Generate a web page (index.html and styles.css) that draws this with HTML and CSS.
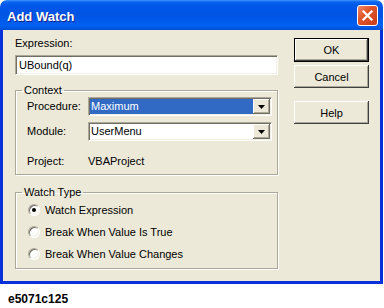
FILE: index.html
```html
<!DOCTYPE html>
<html lang="en">
<head>
  <meta charset="UTF-8">
  <title>Add Watch</title>
  <link rel="stylesheet" href="styles.css">
</head>
<body>
  <div class="window">
    <div class="titlebar">
      <span class="title">Add Watch</span>
      <span class="close">
        <svg width="19" height="19" viewBox="0 0 19 19">
          <path d="M5.5 5.5 L13.5 13.5 M13.5 5.5 L5.5 13.5" stroke="#fff" stroke-width="2.2" stroke-linecap="square"/>
        </svg>
      </span>
    </div>
    <div class="client">
      <div class="main">
        <div class="expr-label">Expression:</div>
        <div class="textbox">UBound(q)</div>

        <fieldset class="group context">
          <legend>Context</legend>
          <div class="field">
            <span class="field-label">Procedure:</span>
            <div class="combo">
              <span class="combo-value selected">Maximum</span>
              <span class="combo-btn">
                <svg width="7" height="4" viewBox="0 0 7 4"><polygon points="0,0 7,0 3.5,4" fill="#000"/></svg>
              </span>
            </div>
          </div>
          <div class="field">
            <span class="field-label">Module:</span>
            <div class="combo">
              <span class="combo-value">UserMenu</span>
              <span class="combo-btn">
                <svg width="7" height="4" viewBox="0 0 7 4"><polygon points="0,0 7,0 3.5,4" fill="#000"/></svg>
              </span>
            </div>
          </div>
          <div class="field project">
            <span class="field-label">Project:</span>
            <span class="project-name">VBAProject</span>
          </div>
        </fieldset>

        <fieldset class="group watch-type">
          <legend>Watch Type</legend>
          <div class="radio-row"><span class="radio checked"></span>Watch Expression</div>
          <div class="radio-row"><span class="radio"></span>Break When Value Is True</div>
          <div class="radio-row"><span class="radio"></span>Break When Value Changes</div>
        </fieldset>
      </div>

      <div class="buttons">
        <button class="btn default">OK</button>
        <button class="btn cancel">Cancel</button>
        <button class="btn help">Help</button>
      </div>
    </div>
  </div>
  <p class="caption">e5071c125</p>
</body>
</html>
```

FILE: styles.css
```css
body {
  margin: 0;
  background: #fff;
  font-family: "Liberation Sans", Arial, sans-serif;
  font-size: 11px;
  line-height: 13px;
  color: #000;
}
.window {
  width: 383px;
}
.titlebar {
  height: 30px;
  box-sizing: border-box;
  display: flex;
  align-items: center;
  justify-content: space-between;
  padding: 0 5px 0 7px;
  border-radius: 7px 7px 0 0;
  background: linear-gradient(#3d95ff 0, #0a63f0 2px, #0057e8 6px, #0054e3 50%, #0060f2 85%, #0050d4 100%);
}
.title {
  padding-top: 3px;
  color: #fff;
  font-weight: bold;
  font-size: 13px;
  line-height: 15px;
  text-shadow: 1px 1px #0f1e8a;
}
.close {
  width: 21px;
  height: 21px;
  box-sizing: border-box;
  display: flex;
  align-items: center;
  justify-content: center;
  border: 1px solid #fff;
  border-radius: 3px;
  background: linear-gradient(135deg, #ee8a66 0, #e0552c 40%, #c63d18 100%);
}
.client {
  display: flex;
  height: 254px;
  box-sizing: border-box;
  padding: 8px 8px 0 12px;
  background: #ece9d8;
  border: 3px solid #0831d9;
  border-top: none;
}
.main {
  width: 263px;
}
.expr-label {
  margin-top: -1px;
  height: 13px;
}
.textbox {
  margin-top: 5px;
  height: 20px;
  box-sizing: border-box;
  padding: 2px 3px;
  background: #fff;
  border: 1px solid;
  border-color: #aca899 #fff #fff #aca899;
  box-shadow: inset 1px 1px #716f64, inset -1px -1px #f1efe2;
  line-height: 15px;
}
.group {
  margin: 0;
  padding: 0;
  min-inline-size: auto;
  border: 1px solid #aca899;
  box-shadow: 1px 1px 0 #fff, inset 1px 1px 0 #fff;
}
.group legend {
  margin-left: 6px;
  padding: 0 2px;
  line-height: 13px;
}
.context {
  margin-top: 9px;
  padding-bottom: 6px;
}
.field {
  display: flex;
  align-items: center;
  height: 19px;
  padding-left: 11px;
}
.field + .field {
  margin-top: 6px;
}
.field.project {
  height: 13px;
  margin-top: 14px;
}
.field-label {
  width: 61px;
  flex: none;
}
.combo {
  width: 184px;
  height: 19px;
  box-sizing: border-box;
  display: flex;
  padding: 1px;
  background: #fff;
  border: 1px solid;
  border-color: #aca899 #fff #fff #aca899;
  box-shadow: inset 1px 1px #716f64, inset -1px -1px #f1efe2;
}
.combo-value {
  flex: 1;
  padding-left: 1px;
  line-height: 15px;
}
.combo-value.selected {
  background: #316ac5;
  color: #fff;
}
.combo-btn {
  width: 17px;
  flex: none;
  display: flex;
  align-items: center;
  justify-content: center;
  background: #ece9d8;
  box-shadow: inset -1px -1px #716f64, inset 1px 1px #fff, inset -2px -2px #aca899;
}
.watch-type {
  margin-top: 11px;
  padding-bottom: 3px;
}
.radio-row {
  display: flex;
  align-items: center;
  height: 22px;
  padding-left: 12px;
}
.radio {
  position: relative;
  width: 12px;
  height: 12px;
  box-sizing: border-box;
  margin-right: 5px;
  border-radius: 50%;
  background: #fff;
  border: 1px solid;
  border-color: #aca899 #fff #fff #aca899;
  box-shadow: inset 1px 1px #716f64, inset -1px -1px #f1efe2;
}
.radio.checked::after {
  content: "";
  position: absolute;
  left: 3px;
  top: 3px;
  width: 4px;
  height: 4px;
  border-radius: 50%;
  background: #000;
}
.buttons {
  margin-left: 16px;
  width: 75px;
  display: flex;
  flex-direction: column;
}
.btn {
  height: 23px;
  margin: 0;
  padding: 0;
  border: none;
  background: #ece9d8;
  font-family: "Liberation Sans", Arial, sans-serif;
  font-size: 11px;
  color: #000;
  box-shadow: inset -1px -1px #404040, inset 1px 1px #fff, inset -2px -2px #aca899;
}
.btn.default {
  height: 24px;
  border: 1px solid #000;
}
.btn.cancel {
  margin-top: 3px;
}
.btn.help {
  margin-top: 13px;
}
.caption {
  margin: 8px 0 0 8px;
  font-weight: bold;
  font-size: 12px;
  line-height: 14px;
}
```
